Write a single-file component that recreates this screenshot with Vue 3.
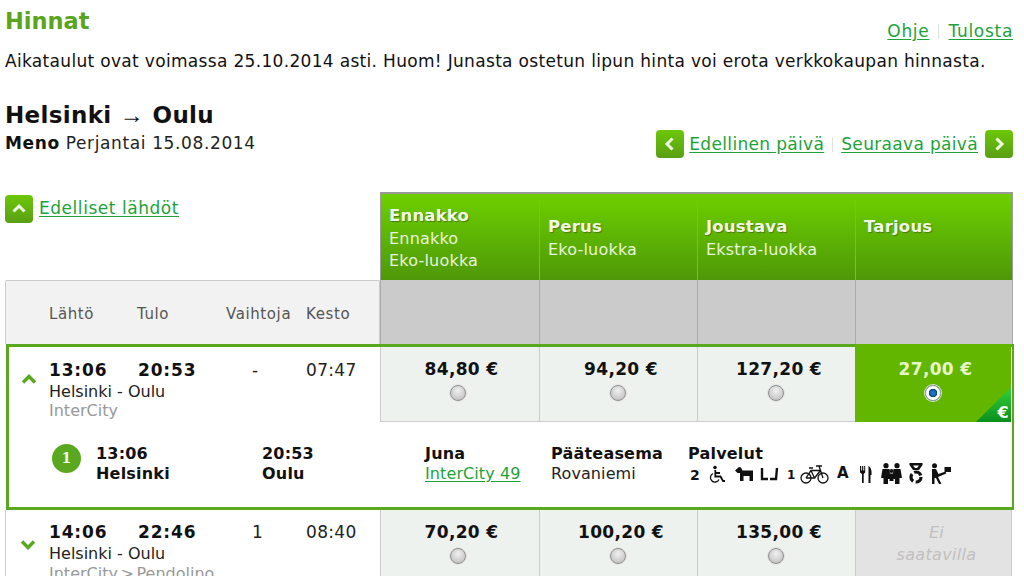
<script setup>
const columns = [
  { name: 'Ennakko', lines: ['Ennakko', 'Eko-luokka'] },
  { name: 'Perus', lines: ['Eko-luokka'] },
  { name: 'Joustava', lines: ['Ekstra-luokka'] },
  { name: 'Tarjous', lines: ['\u00a0'] }
]
const labels = ['Lähtö', 'Tulo', 'Vaihtoja', 'Kesto']
</script>

<template>
  <div class="page">
    <header class="top">
      <h1 class="title">Hinnat</h1>
      <nav class="links">
        <a class="link">Ohje</a><i class="sep"></i><a class="link">Tulosta</a>
      </nav>
    </header>
    <p class="note">Aikataulut ovat voimassa 25.10.2014 asti. Huom! Junasta ostetun lipun hinta voi erota verkkokaupan hinnasta.</p>

    <section class="route">
      <div>
        <h2 class="route-name">Helsinki <span class="arrow">→</span> Oulu</h2>
        <div class="route-date"><b>Meno</b> Perjantai 15.08.2014</div>
      </div>
      <nav class="day-nav">
        <span class="btn"><svg viewBox="0 0 28 28"><path d="M16.500 8.500 11 14l5.500 5.500" /></svg></span>
        <a class="link">Edellinen päivä</a>
        <i class="sep"></i>
        <a class="link last">Seuraava päivä</a>
        <span class="btn"><svg viewBox="0 0 28 28"><path d="M11.500 8.500 17 14l-5.500 5.500" /></svg></span>
      </nav>
    </section>

    <section class="table">
      <div class="head">
        <div class="prev">
          <span class="btn"><svg viewBox="0 0 28 28"><path d="M8.500 16.500 14 11l5.500 5.500" /></svg></span>
          <a class="link">Edelliset lähdöt</a>
        </div>
        <div v-for="c in columns" :key="c.name" class="head-cell">
          <b>{{ c.name }}</b>
          <span v-for="l in c.lines" :key="l">{{ l }}</span>
        </div>
      </div>

      <div class="labels">
        <div class="labels-left cols">
          <span v-for="l in labels" :key="l">{{ l }}</span>
        </div>
        <div v-for="c in columns" :key="c.name" class="label-cell"></div>
      </div>

      <div class="selected">
        <div class="row">
          <div class="info sel-info">
            <svg class="chev" viewBox="0 0 16 10"><path d="M2 8.500 8 2.500l6 6" /></svg>
            <div class="cols times"><b>13:06</b><b>20:53</b><span class="chg">-</span><span>07:47</span></div>
            <div class="place">Helsinki - Oulu</div>
            <div class="train">InterCity</div>
          </div>
          <div class="price"><b>84,80 €</b><i class="radio"></i></div>
          <div class="price"><b>94,20 €</b><i class="radio"></i></div>
          <div class="price"><b>127,20 €</b><i class="radio"></i></div>
          <div class="price picked">
            <b>27,00 €</b><i class="radio on"></i>
            <span class="corner"></span><em class="corner-mark">€</em>
          </div>
        </div>
        <div class="detail">
          <span class="num">1</span>
          <div><b>13:06</b><b>Helsinki</b></div>
          <div><b>20:53</b><b>Oulu</b></div>
          <div><b>Juna</b><a class="link">InterCity 49</a></div>
          <div><b>Pääteasema</b><span>Rovaniemi</span></div>
          <div>
            <b>Palvelut</b>
            <div class="services">
              <b class="svc n2">2</b>
              <svg class="s-chair" width="17" height="21" viewBox="0 0 17 21"><circle cx="6" cy="4.500" r="1.800"/><path class="l" d="M6.300 7v6.500h5.200l2.500 4.500h2M6.300 10h4.700" stroke-width="1.800"/><path class="l" d="M4 10.500a4.500 4.500 0 1 0 6 6" stroke-width="1.300"/></svg>
              <svg class="s-dog" width="18" height="21" viewBox="0 0 18 21"><path d="M0 7.500 4 4l2 .5 1.500 3H18v10.500h-3.500V13H8.500v5H5v-8H2.500z"/></svg>
              <svg class="s-seat" width="19" height="21" viewBox="0 0 19 21"><path class="l" d="M2 5v11h6M17 5l-1 11h-6" stroke-width="2.400"/></svg>
              <b class="svc n1">1</b>
              <svg class="s-bike" width="29" height="21" viewBox="0 0 29 21"><g class="l" stroke-width="1.300"><circle cx="6" cy="15" r="5"/><circle cx="23" cy="15" r="5"/><path d="M6 15 11 7.500h9.500L23 15M11 7.500 14.500 15H6M20.500 7.500 14.500 15M19 3l1.500 4.500M16 3h6M9 5h4"/></g></svg>
              <b class="svc a">A</b>
              <svg class="s-cut" width="12" height="21" viewBox="0 0 12 21"><path d="M0 3h1.200v4.500h.9V3h1.200v4.500h.9V3h1v6.500l-1.500 1.500V20H2v-9L0 9.500zM8.500 3c2.500 1 3.500 5 3 9h-1v8h-2z"/></svg>
              <svg class="s-fam" width="21" height="21" viewBox="0 0 21 21"><circle cx="5" cy="2.700" r="2.600"/><circle cx="16" cy="2.700" r="2.600"/><circle cx="10.500" cy="8" r="2"/><path d="M1.500 6h7L9 10.500h3L12.500 6h7l1.500 9h-2.500v6H14v-5h-1.500v2h-4v-2H7v5H2.500v-6H0z"/></svg>
              <svg class="s-rec" width="16" height="21" viewBox="0 0 16 21"><path d="M1.500 0h13v2l-3.500 5h-6L1.500 2zM5 2.500 7 5h2l2-2.500z" fill-rule="evenodd"/><circle class="l" cx="8" cy="14" r="5" stroke-width="3.200" stroke-dasharray="8 2.500"/></svg>
              <svg class="s-desk" width="20" height="21" viewBox="0 0 20 21"><circle cx="3.500" cy="2.700" r="2.500"/><path d="M1 6h4l2.500 5 7-2.500.8 2L7 14l3.500 7H8l-3-6H3.500v6H1zM13.500 4H20v5h-6.500z"/></svg>
            </div>
          </div>
        </div>
      </div>

      <div class="row next">
        <div class="info next-info">
          <svg class="chev" viewBox="0 0 16 10"><path d="M2 1.500 8 7.500l6-6" /></svg>
          <div class="cols times"><b>14:06</b><b>22:46</b><span class="chg">1</span><span>08:40</span></div>
          <div class="place">Helsinki - Oulu</div>
          <div class="train">InterCity &gt; Pendolino</div>
        </div>
        <div class="price"><b>70,20 €</b><i class="radio"></i></div>
        <div class="price"><b>100,20 €</b><i class="radio"></i></div>
        <div class="price"><b>135,00 €</b><i class="radio"></i></div>
        <div class="price none">Ei<br />saatavilla</div>
      </div>
    </section>
  </div>
</template>

<style>
html, body { margin: 0; overflow: hidden; background: #fff; }
</style>

<style scoped>
.page {
  width: 1024px;
  height: 576px;
  overflow: hidden;
  box-sizing: border-box;
  padding: 0 11px 0 5px;
  font: 17px/22px "DejaVu Sans", Verdana, sans-serif;
  letter-spacing: .33px;
  color: #222;
}
b { color: #111; }
.link { color: #1da33a; text-decoration: underline; text-underline-offset: 2px; }
.sep { display: inline-block; width: 1px; height: 15px; background: #dde5dd; }

.top { display: flex; justify-content: space-between; align-items: flex-end; height: 44px; }
.title { margin: 0; font-size: 22.500px; line-height: 42px; color: #5aa520; align-self: flex-start; letter-spacing: 0; }
.links { display: flex; align-items: center; gap: 9px; line-height: 24px; margin-bottom: 1px; letter-spacing: .7px; }
.note { margin: 0; line-height: 34px; color: #111; height: 32px; letter-spacing: .32px; }

.route { display: flex; justify-content: space-between; align-items: flex-end; margin-top: 24px; height: 58px; }
.route-name { margin: 0; font-size: 23px; line-height: 31px; color: #111; height: 30px; }
.arrow { font: 400 24px/1 "Liberation Sans", sans-serif; }
.route-date { line-height: 26px; height: 28px; letter-spacing: .62px; }
.day-nav { display: flex; align-items: center; gap: 5px; }
.day-nav .sep { margin: 0 3px; }
.day-nav .last { margin-right: 2px; }
.btn {
  display: block;
  width: 28px;
  height: 28px;
  flex: none;
  border-radius: 4px;
  background: linear-gradient(#6cc708, #5a9f14);
}
.btn svg { display: block; width: 28px; height: 28px; fill: none; stroke: #eef7e2; stroke-width: 3; }

.table { margin-top: 34px; }
.head { display: flex; height: 88px; }
.prev { width: 375px; display: flex; gap: 6px; padding-top: 3px; align-items: flex-start; letter-spacing: .54px; }
.prev .link { line-height: 27px; }
.head-cell {
  width: 158px;
  box-sizing: border-box;
  padding: 2px 0 0 8px;
  display: flex;
  flex-direction: column;
  justify-content: center;
  background: linear-gradient(#6dd000, #4e9808);
  border-top: 2px solid #999;
  border-left: 1px solid #9a9a9a;
  color: #e9f5da;
  font-size: 16px;
  letter-spacing: .2px;
}
.head-cell:nth-child(2) { width: 159px; }
.head-cell:last-child { border-right: 1px solid #9a9a9a; }
.head-cell b {
  color: #f1f8e2;
  text-shadow: 1px 1px 1px #4a7a10;
  font-size: 16.500px;
  line-height: 23px;
  letter-spacing: .2px;
  margin: -1px 0 1px;
}

.labels { display: flex; height: 64px; }
.cols { display: grid; grid-template-columns: 88px 89px 80px auto; }
.labels-left {
  width: 375px;
  box-sizing: border-box;
  padding: 22px 0 0 43px;
  border: 1px solid #ccc;
  border-bottom: 0;
  border-radius: 2px 2px 0 0;
  background: #f2f2f2;
  color: #555;
  font-size: 15px;
  letter-spacing: .6px;
}
.label-cell { width: 158px; box-sizing: border-box; background: #cbcbcb; border-left: 1px solid #aaa; }
.label-cell:nth-child(2) { width: 159px; }
.label-cell:last-child { border-right: 1px solid #aaa; }

.selected {
  width: 1008px;
  margin-left: 1px;
  box-sizing: border-box;
  border: 3px solid #5aa820;
  border-right-width: 2px;
}
.row { display: flex; height: 75px; }
.info { position: relative; box-sizing: border-box; padding: 12px 0 0 40px; }
.sel-info { width: 371px; }
.times { grid-template-columns: 89px 88px 80px auto; }
.times b { font-size: 17px; letter-spacing: .85px; }
.chg { padding-left: 26px; }
.place { font-size: 16px; letter-spacing: 0; line-height: 22px; }
.train { color: #999; font-size: 16px; letter-spacing: 0; line-height: 16px; word-spacing: -2.500px; }
.chev {
  position: absolute;
  left: 12px;
  top: 27px;
  width: 16px;
  height: 10px;
  fill: none;
  stroke: #5aa820;
  stroke-width: 3.400;
}
.price {
  position: relative;
  width: 158px;
  box-sizing: border-box;
  display: flex;
  flex-direction: column;
  align-items: center;
  padding-top: 11px;
  background: #eef2ee;
  border-left: 1px solid #ccc;
  border-bottom: 1px solid #ccc;
}
.price:nth-child(2) { width: 159px; padding-right: 2px; }
.price b { margin-left: 5px; }
.radio {
  display: block;
  width: 16px;
  height: 16px;
  box-sizing: border-box;
  margin: 5px 0 0 -2px;
  border-radius: 50%;
  border: 1px solid #8f8f8f;
  box-shadow: 0 0 0 1px #e2e2e2;
  background: radial-gradient(circle at 50% 35%, #f0f0f0, #b8b8b8);
}
.radio.on {
  margin-left: 0;
  border-color: #8a9bb0;
  background: radial-gradient(circle, #1a74c0 0 2px, #0c3f73 4px, #fff 4.500px);
}
.picked {
  width: 156px;
  margin-top: -3px;
  padding-top: 14px;
  height: 78px;
  border: 0;
  background: #62b600;
}
.picked b { color: #e6f6c9; }
.corner {
  position: absolute;
  right: 0;
  bottom: 0;
  width: 35px;
  height: 35px;
  background: linear-gradient(#32d23a, #0a8f1c);
  clip-path: polygon(100% 0, 100% 100%, 0 100%);
}
.corner-mark {
  position: absolute;
  right: 2px;
  bottom: 0;
  font: bold 16px/18px "DejaVu Sans", sans-serif;
  color: #fff;
}

.detail {
  height: 85px;
  box-sizing: border-box;
  padding: 22px 0 0 43px;
  display: grid;
  grid-template-columns: 44px 166px 163px 126px 137px 1fr;
  line-height: 20px;
  background: #fff;
  font-size: 16px;
  letter-spacing: .1px;
}
.detail > div > * { display: block; }
.detail b { font-size: 16px; letter-spacing: .2px; }
.num {
  width: 29px;
  height: 29px;
  border-radius: 50%;
  background: #5aa820;
  color: #eff8e0;
  font: bold 14px/29px "DejaVu Serif", serif;
  text-align: center;
}
.services { display: flex !important; align-items: flex-start; height: 21px; margin-top: -1px; }
.services svg { flex: none; fill: #111; }
.services .l { fill: none; stroke: #111; }
.services .svc { display: block; flex: none; letter-spacing: 0; }
.services .n2 { width: 10px; margin: 3px 0 0 2px; font-size: 14px; line-height: 18px; }
.s-chair { margin-left: 9px; }
.s-dog { margin-left: 9px; }
.s-seat { margin-left: 7px; }
.services .n1 { width: 7px; margin: 4px 0 0 8px; font-size: 12px; line-height: 17px; }
.s-bike { margin-left: 6px; }
.services .a { width: 12px; margin: 2px 0 0 8px; font-size: 15px; line-height: 17px; }
.s-cut { margin-left: 11px; }
.s-fam { margin-left: 9px; }
.s-rec { margin-left: 6px; }
.s-desk { margin-left: 7px; }

.next { height: 75px; }
.next-info { width: 375px; padding-left: 43px; padding-top: 11px; border-left: 1px solid #ccc; }
.next .train { line-height: 18px; }
.next .chev { left: 14px; top: 30px; }
.none {
  width: 157px;
  padding: 12px 0 0 6px;
  background: #e3e3e3;
  color: #c0c0c0;
  font-size: 16px;
  font-style: italic;
  text-align: center;
  border-right: 1px solid #ccc;
}
</style>
